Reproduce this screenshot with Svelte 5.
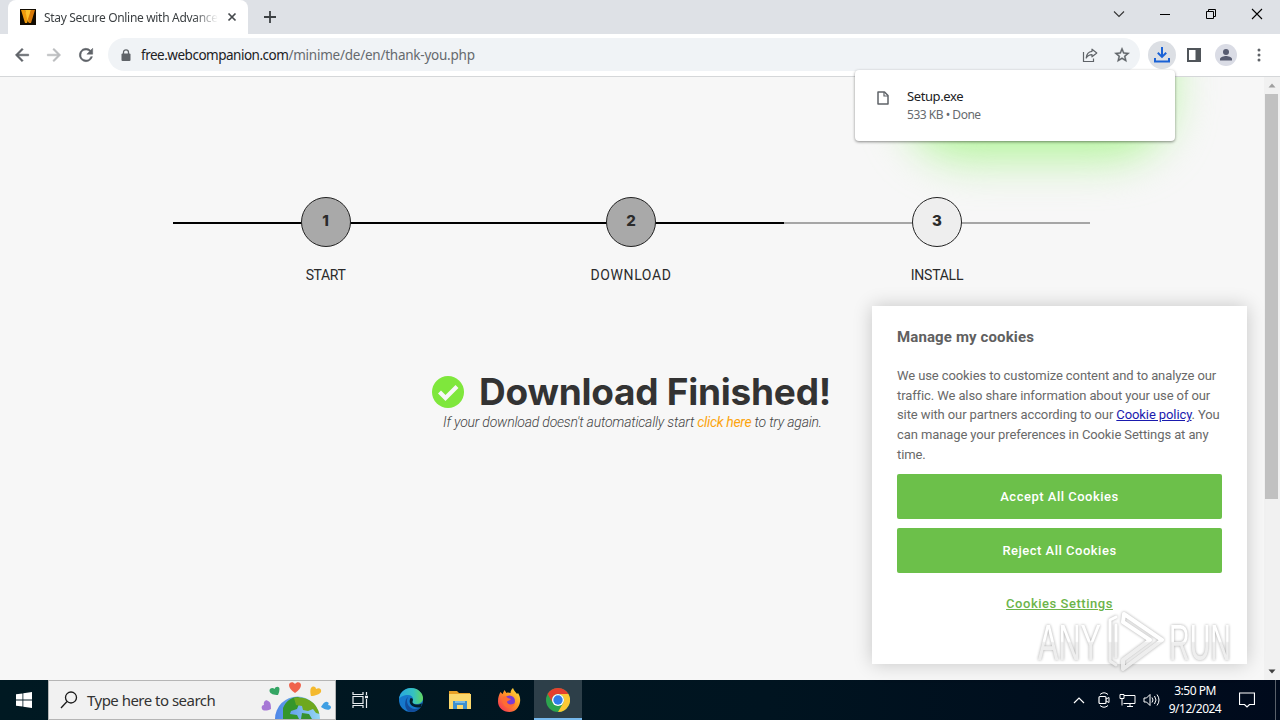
<script lang="ts">
	interface Step {
		label: string;
		done: boolean;
		spacing: number;
	}

	const steps: Step[] = [
		{ label: 'START', done: true, spacing: -0.4 },
		{ label: 'DOWNLOAD', done: true, spacing: 0.6 },
		{ label: 'INSTALL', done: false, spacing: -0.25 },
	];

	// one entry per line of the consent text
	const cookieLines = [
		'We use cookies to customize content and to analyze our',
		'traffic. We also share information about your use of our',
	];
</script>

<div class="window">
	<header class="tabstrip">
		<div class="tab">
			<svg class="favicon" viewBox="0 0 16 16">
				<rect width="16" height="16" fill="#130c02" />
				<path d="M1 1h4l3 8-1 5H5z" fill="#f09a0c" />
				<path d="M5 1h6l-1 9-2 4z" fill="#ffc12b" />
				<path d="M11 1h4l-4 13H9l-1-4z" fill="#d97a08" />
			</svg>
			<span class="tab-title">Stay Secure Online with Advance</span>
			<svg class="tab-close" viewBox="0 0 10 10"><path d="M1.500 1.500l7 7M8.500 1.500l-7 7" stroke="#45494d" stroke-width="1.700" /></svg>
		</div>
		<svg class="new-tab" viewBox="0 0 12 12"><path d="M6 0v12M0 6h12" stroke="#3c4043" stroke-width="1.800" /></svg>
		<div class="window-buttons">
			<svg viewBox="0 0 46 28"><path d="M18 11.500l5 5 5-5" fill="none" stroke="#333" stroke-width="1.100" /></svg>
			<svg viewBox="0 0 46 28"><path d="M18 14.500h10" stroke="#000" /></svg>
			<svg viewBox="0 0 46 28"><path d="M18.500 11.500h7v7h-7zM20.500 11.500v-2h7v7h-2" fill="none" stroke="#000" /></svg>
			<svg viewBox="0 0 46 28"><path d="M18 9l10 10M28 9L18 19" stroke="#000" stroke-width="1.100" /></svg>
		</div>
	</header>

	<div class="toolbar">
		<svg class="nav" viewBox="0 0 24 24"><path d="M20 11H7.830l5.590-5.590L12 4l-8 8 8 8 1.410-1.410L7.830 13H20z" fill="#5f6368" stroke="#5f6368" stroke-width="0.600" /></svg>
		<svg class="nav" viewBox="0 0 24 24"><path d="M4 11h12.170l-5.590-5.590L12 4l8 8-8 8-1.410-1.410L16.170 13H4z" fill="#babcbe" stroke="#babcbe" stroke-width="0.600" /></svg>
		<svg class="nav" viewBox="0 0 24 24"><path d="M17.650 6.350A8 8 0 1 0 19.730 14h-2.080A6 6 0 1 1 12 6c1.660 0 3.140.69 4.220 1.780L13 11h7V4z" fill="#5f6368" stroke="#5f6368" stroke-width="0.600" /></svg>
		<div class="omnibox">
			<svg class="lock" viewBox="0 0 10 12">
				<path d="M2.500 6V3.300a2.500 2.500 0 0 1 5 0V6" fill="none" stroke="#5f6368" stroke-width="1.300" />
				<rect x="0.500" y="4.500" width="9" height="7.500" rx="1" fill="#5f6368" />
			</svg>
			<span class="url"><b>free.webcompanion.com</b>/minime/de/en/thank-you.php</span>
			<svg class="share" viewBox="0 0 16 16">
				<path d="M1.500 5v9.500h10v-3" fill="none" stroke="#5f6368" stroke-width="1.200" />
				<path d="M10 2.200L14.800 6 10 9.800V7.600C7.200 7.600 5.500 8.800 4.200 11c.3-3.700 2.300-6.300 5.800-6.700z" fill="none" stroke="#5f6368" stroke-width="1.200" stroke-linejoin="round" />
			</svg>
			<svg class="star" viewBox="0 0 24 24"><path d="M22 9.240l-7.190-.62L12 2 9.190 8.630 2 9.240l5.460 4.730L5.820 21 12 17.270 18.180 21l-1.630-7.030zM12 15.400l-3.760 2.270 1-4.280-3.320-2.880 4.380-.38L12 6.100l1.710 4.040 4.380.38-3.320 2.880 1 4.280z" fill="#5f6368" stroke="#5f6368" stroke-width="0.500" /></svg>
		</div>
		<div class="downloads">
			<svg viewBox="0 0 18 18">
				<path d="M9 1v9.500M4.800 6.700L9 10.900l4.200-4.200M2 12v3.500h14V12" fill="none" stroke="#1a62d6" stroke-width="2" />
			</svg>
		</div>
		<svg class="panel" viewBox="0 0 14 14"><path d="M1 1h12v12H1z" fill="none" stroke="#50555a" stroke-width="2" /><path d="M8.500 0H14v14H8.500z" fill="#50555a" /></svg>
		<div class="avatar">
			<svg viewBox="0 0 14 14"><circle cx="7" cy="4" r="3" fill="#565b70" /><path d="M1 12.500V11c0-2 4-3 6-3s6 1 6 3v1.500z" fill="#565b70" /></svg>
		</div>
		<svg class="menu" viewBox="0 0 4 14" fill="#5f6368"><circle cx="2" cy="2" r="1.500" /><circle cx="2" cy="7" r="1.500" /><circle cx="2" cy="12" r="1.500" /></svg>
	</div>

	<div class="viewport">
		<main class="page">
			<div class="glow"></div>
			<ol class="steps">
				{#each steps as step, i}
					<li class="step" class:done={step.done}>
						<div class="track">
							<span class="circle">{i + 1}</span>
						</div>
						<span class="label" style="letter-spacing: {step.spacing}px">{step.label}</span>
					</li>
				{/each}
			</ol>
			<h1>
				<svg class="check" viewBox="0 0 32 32">
					<circle cx="16" cy="16" r="16" fill="#7fe73c" />
					<path d="M7.500 16l6 6L25 10.500" fill="none" stroke="#f7f7f7" stroke-width="4.200" />
				</svg>
				<span>Download Finished!</span>
			</h1>
			<p class="hint">If your download doesn't automatically start <a href="#retry">click here</a> to try again.</p>
		</main>
		<div class="scrollbar">
			<svg viewBox="0 0 16 17"><path d="M4.500 10.500h7L8 6.500z" fill="#a0a0a0" /></svg>
			<div class="thumb"></div>
			<svg viewBox="0 0 16 17"><path d="M4.500 6.500h7L8 10.500z" fill="#404040" /></svg>
		</div>
	</div>

	<footer class="taskbar">
		<div class="start">
			<svg viewBox="0 0 16 16" fill="#fff"><path d="M0 2.300l6.500-.9v6.200H0zM7.300 1.300L16 0v7.600H7.300zM0 8.400h6.500v6.200L0 13.700zM7.300 8.400H16V16l-8.700-1.300z" /></svg>
		</div>
		<div class="search">
			<svg class="lens" viewBox="0 0 18 18"><circle cx="11" cy="6.500" r="5.500" fill="none" stroke="#1a1a1a" stroke-width="1.300" /><path d="M7 10.500L1 17" stroke="#1a1a1a" stroke-width="1.300" /></svg>
			<span>Type here to search</span>
			<svg class="earth" viewBox="0 0 72 38">
				<defs>
					<clipPath id="globe"><circle cx="36.500" cy="38" r="22.500" /></clipPath>
					<linearGradient id="sea" x1="0" x2="1"><stop offset="0" stop-color="#4a82e6" /><stop offset="1" stop-color="#9adcf5" /></linearGradient>
				</defs>
				<g clip-path="url(#globe)">
					<rect x="12" y="14" width="50" height="24" fill="url(#sea)" />
					<path d="M22 27c3-7 8-11 15-11l6 3-5 4-2 5-6 2-1 3 7 1 2 4H22z" fill="#35962b" />
					<path d="M33 17c12-2 23 4 26 16l-4-1-3-4-5 2-5-1-1-4-6-1z" fill="#6ea81f" />
					<path d="M41 32l7 1 3 5H40z" fill="#37912e" />
				</g>
				<path d="M34 12c-4-3-6-5-6-8 0-3 4-4 6-1 2-3 6-2 6 1 0 3-2 5-6 8z" fill="#f0624c" />
				<path d="M17 14c-4 0-8-1-8.500-4-.4-3 3.500-4 5-2 1-3 5-3 5 0 0 2-.5 4-1.500 6z" fill="#35a564" />
				<path d="M50 15c-1-4-1-8 1-9 2-1 4 0 4 2 3-2 6 0 5 3-1 2-6 4-10 4z" fill="#f4b92e" />
				<path d="M10 28c-4 2-8 2-9 0s0-4 2-4c-1-3 2-6 4-4 3 1 3 5 3 8z" fill="#a678d5" />
				<path d="M60 26c2-3 4-6 6-5 2 0 2 2 1 3 3 0 4 3 2 4-2 2-6 0-9-2z" fill="#3f9fe3" />
			</svg>
		</div>
		<div class="app">
			<svg viewBox="0 0 18 18" width="18" height="18" fill="none" stroke="#e8edf0" stroke-width="1.200"><path d="M1 1v2.500h10V1M1 17v-2.500h10V17M1 5.500h10v7H1zM14.500 1v3M14.500 8v9" /><path d="M13 6h3" stroke-width="2.500" /></svg>
		</div>
		<div class="app edge">
			<svg viewBox="0 0 24 24" width="24" height="24">
				<defs>
					<linearGradient id="wave" x1="0" x2="1"><stop offset="0" stop-color="#28a7e0" /><stop offset="0.600" stop-color="#35c1c1" /><stop offset="1" stop-color="#62d75e" /></linearGradient>
				</defs>
				<circle cx="12" cy="12" r="12" fill="#1678cc" />
				<path d="M0 11C1 4 6 0 12 0c7 0 12 5 12 10 0 4-3 6-7 6-3 0-4-1-4-2s1-1 1-3c0-2-2-4-5-4-4 0-8 2-9 4z" fill="url(#wave)" />
				<path d="M9 9c-3 5 1 12 7 12 2 0 4-.8 6-2-2 3-6 5-10 5C6 24 4 13 9 9z" fill="#124d9c" />
				<path d="M11.500 10c2 0 3 1.200 2.200 3-.9 2 1.300 3.600 4.300 3.600 2 0 3.600-.4 5-1.300L22 19c-6 2-14-2-10.500-9z" fill="#031d2b" />
			</svg>
		</div>
		<div class="app">
			<svg viewBox="0 0 22 19" width="22" height="19"><path d="M0 0h8l2 2h11v4H0z" fill="#e8a126" /><path d="M0 3h22v15H0z" fill="#fbd86c" /><path d="M4 18v-8h14v8h-4v-4H8v4z" fill="#3d90cf" /><path d="M6 10h10v2H6z" fill="#79bbe6" /></svg>
		</div>
		<div class="app">
			<svg viewBox="0 0 24 24" width="24" height="24">
				<defs>
					<linearGradient id="fox" x1="1" y1="0" x2="0" y2="1"><stop offset="0" stop-color="#fff043" /><stop offset="0.450" stop-color="#ff9424" /><stop offset="1" stop-color="#f4245e" /></linearGradient>
				</defs>
				<path d="M3.500 4l2 2 2-4 2 3c2-1 3 0 4 0 0-2 1-4 2.500-5 1 3 3 4 4 6l1-1c2 3 2.500 6 2 9-1 6-5 10-10.500 10C6 24 1 19.500 1 13.500 1 9 2 7 3.500 4z" fill="url(#fox)" />
				<circle cx="12.500" cy="13" r="5.500" fill="#7b3bd2" />
				<path d="M6 9c2-1 4 0 5 1l3 1c-1 2-3 1-4 3 1 3 5 3 8 1-1 4-4 6-7 5-4-1-7-6-5-11z" fill="#ff6c33" />
			</svg>
		</div>
		<div class="app active">
			<svg viewBox="0 0 24 24" width="24" height="24">
				<circle cx="12" cy="12" r="12" fill="#2da44e" />
				<path d="M1.600 6A12 12 0 0 1 22.400 6H12a6 6 0 0 0-5.200 9z" fill="#e5402f" />
				<path d="M22.400 6A12 12 0 0 1 12 24l5.200-9A6 6 0 0 0 12 6z" fill="#fcc934" />
				<circle cx="12" cy="12" r="6" fill="#fff" />
				<circle cx="12" cy="12" r="4.700" fill="#2f7de9" />
			</svg>
		</div>
		<div class="tray">
			<svg viewBox="0 0 12 8" width="12" height="8"><path d="M1 7l5-5 5 5" fill="none" stroke="#fff" stroke-width="1.200" /></svg>
			<svg viewBox="0 0 12 16" width="12" height="16" fill="none" stroke="#fff"><path d="M2 2.500Q6-1 10 2.500M2 13.500q4 3.500 8 0" /><rect x="1" y="4.500" width="7" height="7" rx="1" stroke-width="1.200" /><path d="M8 7l3-1.500v5L8 9" /></svg>
			<svg viewBox="0 0 17 14" width="17" height="14" fill="none" stroke="#fff"><path d="M5 2.500h11v8H4.500M1 1.500h4v4H1zM3 5.500v7M8 13.500h6M11 10.500v3" /></svg>
			<svg viewBox="0 0 17 14" width="17" height="14" fill="none" stroke="#fff"><path d="M1 5h2.500L7 1.500v11L3.500 9H1zM9 4.500q2 2.500 0 5M11.500 3q3 4 0 8M14 1.500q4 5.500 0 11" /></svg>
			<div class="clock">
				<span>3:50 PM</span>
				<span>9/12/2024</span>
			</div>
			<svg viewBox="0 0 16 16" width="16" height="16" fill="none" stroke="#fff" stroke-width="1.200"><path d="M.5 1h15v11.500h-5L8 15l-2.500-2.500h-5z" /></svg>
		</div>
		<div class="show-desktop"></div>
	</footer>

	<!-- layers over the page -->
	<div class="download-bubble">
		<svg viewBox="0 0 12 14"><path d="M1 1h6.500L11 4.500V13H1z" fill="none" stroke="#5f6368" stroke-width="1.500" stroke-linejoin="round" /><path d="M7 1v4h4" fill="none" stroke="#5f6368" stroke-width="1.200" /></svg>
		<div>
			<div class="file-name">Setup.exe</div>
			<div class="file-state">533 KB • Done</div>
		</div>
	</div>

	<section class="cookies">
		<h2>Manage my cookies</h2>
		<p>
			{#each cookieLines as line}
				<span>{line}</span><br />
			{/each}
			<span>site with our partners according to our <a href="#policy">Cookie policy</a>. You</span><br />
			<span>can manage your preferences in Cookie Settings at any</span><br />
			<span>time.</span>
		</p>
		<button>Accept All Cookies</button>
		<button>Reject All Cookies</button>
		<a class="settings" href="#settings">Cookies Settings</a>
	</section>

	<svg class="watermark" viewBox="0 0 200 68">
		<defs>
			<linearGradient id="fade" gradientUnits="userSpaceOnUse" x1="0" y1="0" x2="0" y2="68">
				<stop offset="0" stop-color="#fff" />
				<stop offset="0.490" stop-color="#fff" />
				<stop offset="0.510" stop-color="#ececec" />
				<stop offset="1" stop-color="#ececec" />
			</linearGradient>
		</defs>
		<text x="2" y="52" textLength="63" lengthAdjust="spacingAndGlyphs" fill="url(#fade)">ANY</text>
		<g fill="none" stroke="url(#fade)" stroke-width="4" stroke-linejoin="round" stroke-linecap="round">
			<path d="M88 6l38 26-39 29V52l27-20-27-18z" />
			<path d="M80 9l-6 3v41l6 4M80 17v32" stroke-width="3" />
		</g>
		<text x="133" y="52" textLength="62" lengthAdjust="spacingAndGlyphs" fill="url(#fade)">RUN</text>
	</svg>
</div>

<style>
	:global(body) {
		margin: 0;
	}

	.window {
		position: relative;
		width: 1280px;
		height: 720px;
		display: flex;
		flex-direction: column;
		overflow: hidden;
		font-family: 'Noto Sans', 'Open Sans', sans-serif;
		background: #f7f7f7;
	}

	svg {
		display: block;
		flex: none;
	}

	/* browser chrome */
	.tabstrip {
		display: flex;
		height: 34px;
		background: #dee1e6;
	}

	.tab {
		display: flex;
		align-items: center;
		box-sizing: border-box;
		width: 240px;
		height: 34px;
		margin-left: 8px;
		padding: 0 11px 0 12px;
		background: #fff;
		border-radius: 8px 8px 0 0;
	}

	.favicon {
		width: 16px;
		height: 16px;
		margin-right: 8px;
	}

	.tab-title {
		font-size: 12px;
		letter-spacing: -0.32px;
		color: #3c4043;
		white-space: nowrap;
		mask-image: linear-gradient(90deg, #000 86%, transparent);
	}

	.tab-close {
		width: 10px;
		height: 10px;
		margin-left: auto;
	}

	.new-tab {
		width: 12px;
		height: 12px;
		margin: 11px 0 0 16px;
	}

	.window-buttons {
		display: flex;
		margin-left: auto;
	}

	.window-buttons svg {
		width: 46px;
		height: 28px;
	}

	.toolbar {
		display: flex;
		align-items: center;
		box-sizing: border-box;
		height: 43px;
		padding: 0 0 1px 12px;
		background: #fff;
		border-bottom: 1px solid #d5d7d9;
	}

	.nav {
		width: 20px;
		height: 20px;
		margin-right: 12px;
	}

	.omnibox {
		display: flex;
		align-items: center;
		box-sizing: border-box;
		width: 1032px;
		height: 33px;
		padding: 0 9px 0 13px;
		border-radius: 17px;
		background: #f0f3f6;
	}

	.lock {
		width: 10px;
		height: 12px;
		margin-right: 10px;
	}

	.url {
		flex: 1;
		font-size: 13.5px;
		letter-spacing: -0.24px;
		color: #666a6e;
	}

	.url b {
		font-weight: 400;
		letter-spacing: -0.49px;
		color: #202124;
	}

	.share {
		width: 16px;
		height: 16px;
		margin-right: 15px;
	}

	.star {
		width: 18px;
		height: 18px;
	}

	.downloads {
		display: grid;
		place-items: center;
		width: 28px;
		height: 28px;
		margin-left: 8px;
		border-radius: 50%;
		background: #dcdfe4;
	}

	.downloads svg {
		width: 18px;
		height: 18px;
	}

	.panel {
		width: 14px;
		height: 14px;
		margin-left: 11px;
	}

	.avatar {
		display: grid;
		place-items: center;
		width: 22px;
		height: 22px;
		margin: 0 20px 0 14px;
		border-radius: 50%;
		background: #dadce5;
	}

	.avatar svg {
		width: 14px;
		height: 14px;
	}

	.menu {
		width: 4px;
		height: 14px;
	}

	/* page */
	.viewport {
		display: flex;
		height: 603px;
	}

	.page {
		position: relative;
		flex: 1;
		padding: 120px 0 0 173px;
		overflow: hidden;
		font-family: Roboto, sans-serif;
		color: #2b2b2b;
	}

	.glow {
		position: absolute;
		left: 905px;
		top: -90px;
		width: 265px;
		height: 172px;
		border-radius: 60px;
		background: #b4f59c;
		filter: blur(22px);
	}

	.steps {
		position: relative;
		display: grid;
		grid-template-columns: 305px 306px 306px;
		width: 917px;
		margin: 0;
		padding: 0;
		list-style: none;
	}

	.step {
		text-align: center;
	}

	.track {
		display: flex;
		justify-content: center;
		align-items: center;
		height: 50px;
		background: linear-gradient(#a6a6a6, #a6a6a6) 0 25px / 100% 2px no-repeat;
	}

	.done .track {
		background-image: linear-gradient(#000, #000);
	}

	.circle {
		box-sizing: border-box;
		width: 50px;
		height: 50px;
		border: 1px solid #222;
		border-radius: 50%;
		background: #eee;
		font: 800 15px/46px Inter, sans-serif;
	}

	.done .circle {
		background: #a9a9a9;
	}

	.label {
		display: block;
		margin-top: 18px;
		font-size: 14px;
		line-height: 20px;
	}

	h1 {
		display: flex;
		align-items: center;
		width: 917px;
		height: 44px;
		margin: 85px 0 0;
		justify-content: center;
		font: 700 37px/44px Inter, sans-serif;
		letter-spacing: -0.25px;
		color: #333;
	}

	.check {
		width: 32px;
		height: 32px;
		margin-right: 15px;
	}

	.hint {
		width: 919px;
		margin: -2px 0 0;
		font-size: 14px;
		font-style: italic;
		font-weight: 300;
		line-height: 20px;
		letter-spacing: -0.2px;
		text-align: center;
		color: #444;
	}

	.hint a {
		color: #fca510;
		font-weight: 400;
		letter-spacing: -0.35px;
		text-decoration: none;
	}

	.scrollbar {
		display: flex;
		flex-direction: column;
		width: 16px;
		background: #f1f1f1;
	}

	.scrollbar svg {
		width: 16px;
		height: 17px;
	}

	.thumb {
		height: 405px;
		margin: 0 2px 164px 1px;
		background: #c1c1c1;
	}

	/* overlays */
	.download-bubble {
		position: absolute;
		left: 855px;
		top: 70px;
		display: flex;
		box-sizing: border-box;
		width: 320px;
		height: 71px;
		padding: 17px 22px;
		border-radius: 4px;
		background: #fff;
		box-shadow: 0 1px 3px rgba(0, 0, 0, 0.45);
		color: #202124;
	}

	.download-bubble svg {
		width: 12px;
		height: 14px;
		margin: 4px 18px 0 0;
	}

	.file-name {
		font-size: 13px;
		line-height: 18px;
		letter-spacing: -0.4px;
	}

	.file-state {
		margin-top: 1px;
		font-size: 12px;
		line-height: 18px;
		letter-spacing: -0.48px;
		color: #666a6e;
	}

	.cookies {
		position: absolute;
		left: 872px;
		top: 306px;
		display: flex;
		flex-direction: column;
		box-sizing: border-box;
		width: 375px;
		height: 358px;
		padding: 21px 25px;
		background: #fff;
		box-shadow: 0 0 18px rgba(0, 0, 0, 0.2);
		font-family: Roboto, sans-serif;
		color: #696969;
	}

	.cookies h2 {
		margin: 0 0 19px;
		font-size: 15px;
		line-height: 20px;
		letter-spacing: 0.13px;
		color: #606060;
	}

	.cookies p {
		margin: 0 0 9px;
		font-size: 13px;
		line-height: 19.7px;
		letter-spacing: -0.1px;
		white-space: nowrap;
	}

	.cookies p a {
		color: #1a1aae;
	}

	.cookies button {
		height: 45px;
		margin: 0 0 9px;
		padding: 0;
		border: 0;
		border-radius: 2px;
		background: #6cc04a;
		color: #fff;
		font: 500 13px Roboto, sans-serif;
		letter-spacing: 0.5px;
	}

	.settings {
		margin-top: 12px;
		font-size: 13px;
		font-weight: 500;
		line-height: 20px;
		letter-spacing: 0.53px;
		text-align: center;
		color: #6cb44a;
	}

	.watermark {
		position: absolute;
		left: 1036px;
		top: 608px;
		width: 200px;
		height: 68px;
		filter: drop-shadow(0 0 1.5px rgba(0, 0, 0, 0.4));
		opacity: 0.85;
	}

	.watermark text {
		font: 400 50px 'Liberation Sans', sans-serif;
	}

	/* taskbar */
	.taskbar {
		display: flex;
		height: 40px;
		background: linear-gradient(90deg, #001922, #001420 60%, #000a1c);
	}

	.start {
		display: grid;
		place-items: center;
		width: 48px;
	}

	.start svg {
		width: 16px;
		height: 16px;
	}

	.search {
		display: flex;
		align-items: center;
		box-sizing: border-box;
		width: 288px;
		padding-left: 11px;
		border: 1px solid #b5b5b5;
		background: #f1f1f1;
		color: #333;
		font-size: 15px;
	}

	.lens {
		width: 18px;
		height: 18px;
		margin-right: 9px;
	}

	.search span {
		letter-spacing: -0.52px;
		white-space: nowrap;
	}

	.earth {
		width: 72px;
		height: 38px;
		margin: 0 2px 0 auto;
	}

	.app {
		display: grid;
		place-items: center;
		width: 49px;
	}

	.app.edge {
		margin-left: 1px;
	}

	.app.active {
		box-sizing: border-box;
		width: 48px;
		margin-left: 1px;
		background: #2d3f49;
		border-bottom: 2px solid #76b9ed;
		padding-top: 2px;
	}

	.tray {
		display: flex;
		align-items: center;
		margin-left: auto;
		padding-right: 20px;
	}

	.tray svg:nth-child(2) {
		margin-left: 13px;
	}

	.tray svg:nth-child(3) {
		margin-left: 9px;
	}

	.tray svg:nth-child(4) {
		margin-left: 7px;
	}

	.clock {
		display: flex;
		flex-direction: column;
		width: 60px;
		margin: 0 14px 0 5px;
		font-size: 12px;
		line-height: 18px;
		letter-spacing: -0.5px;
		text-align: center;
		color: #fff;
	}

	.show-desktop {
		width: 4px;
		border-left: 1px solid #59606a;
	}
</style>
